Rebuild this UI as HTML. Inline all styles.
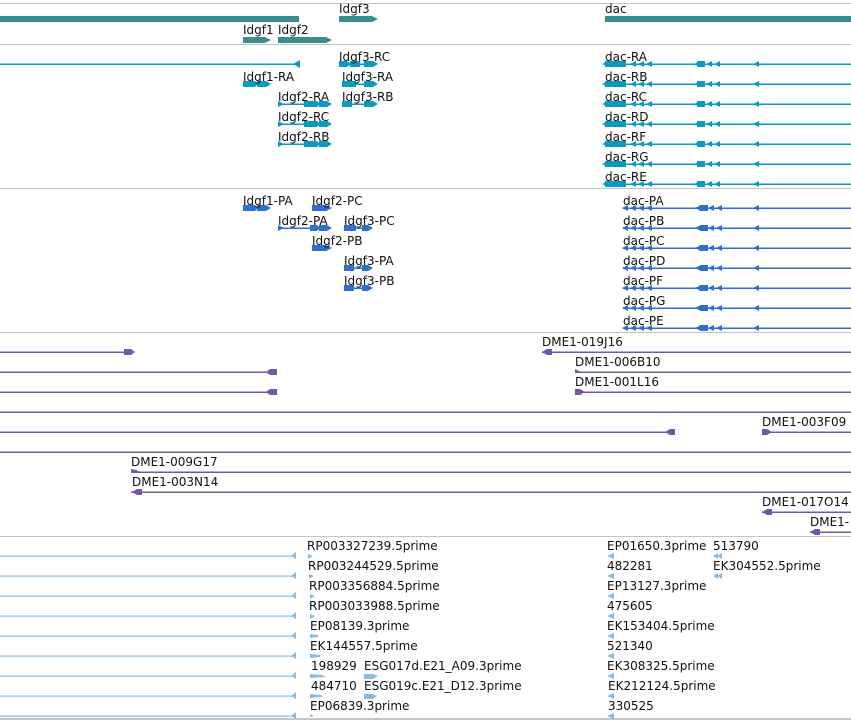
<!DOCTYPE html>
<html><head><meta charset="utf-8"><style>
html,body{margin:0;padding:0;background:#fff;}
svg{display:block;}
text{font-family:"DejaVu Sans","Liberation Sans",sans-serif;font-size:12px;fill:#111;}
</style></head><body>
<svg width="851" height="721" viewBox="0 0 851 721" xmlns="http://www.w3.org/2000/svg">
<defs>
<polygon id="la" points="0,0 6,-3 6,3" />
<polygon id="ra" points="6,0 0,-3 0,3" />
<g id="dacT"><rect x="605" y="-3" width="21" height="6"/><use href="#la" x="602"/><use href="#la" x="630"/><use href="#la" x="638"/><use href="#la" x="646"/><use href="#la" x="694"/><rect x="697" y="-3" width="8" height="6"/><use href="#la" x="706"/><use href="#la" x="714"/><use href="#la" x="753"/><rect x="605" y="-0.5" width="246" height="1.5"/></g>
<g id="dacP"><use href="#la" x="622"/><use href="#la" x="630"/><use href="#la" x="638"/><use href="#la" x="646"/><use href="#la" x="695"/><rect x="700" y="-3" width="8" height="6"/><use href="#la" x="708"/><use href="#la" x="716"/><use href="#la" x="753"/><rect x="623" y="-0.5" width="228" height="1.5"/></g>
</defs>
<g fill="#c4c4c4"><rect x="0" y="3" width="851" height="1"/><rect x="0" y="44" width="851" height="1"/><rect x="0" y="188" width="851" height="1"/><rect x="0" y="332" width="851" height="1"/><rect x="0" y="536" width="851" height="1"/><rect x="0" y="718" width="851" height="2"/></g>

<!-- track 1 -->
<g fill="#3d8c8e">
<rect x="0" y="16" width="299" height="6"/>
<polygon points="339,16 372,16 378,19 372,22 339,22"/>
<rect x="605" y="16" width="246" height="6"/>
<polygon points="243,37 265,37 271,40 265,43 243,43"/>
<polygon points="278,37 326,37 332,40 326,43 278,43"/>
</g>
<text x="339" y="13">Idgf3</text><text x="605" y="13">dac</text>
<text x="243" y="34">Idgf1</text><text x="278" y="34">Idgf2</text>

<!-- track 2 -->
<g fill="#0a9bc2">
<rect x="0" y="63.5" width="296" height="1.5"/><polygon points="300,60 300,68 293,64"/>
<g transform="translate(0,64)"><rect x="339" y="-3" width="8" height="6"/><use href="#ra" x="346"/><rect x="350" y="-3" width="10" height="6"/><rect x="339" y="-.5" width="35" height="1.5"/><polygon points="364,-3 373,-3 378,0 373,3 364,3"/></g>
<g transform="translate(0,84)"><polygon points="243,-3 255,-3 258,0 255,3 243,3"/><polygon points="257,-3 266,-3 271,0 266,3 257,3"/><rect x="342" y="-3" width="14" height="6"/><rect x="342" y="-.5" width="30" height="1.5"/><polygon points="364,-3 373,-3 378,0 373,3 364,3"/></g>
<g transform="translate(0,104)"><rect x="278" y="-.5" width="50" height="1.5"/><use href="#ra" x="278"/><polygon points="304,-3 317,-3 320,0 317,3 304,3"/><polygon points="319,-3 327,-3 332,0 327,3 319,3"/><rect x="342" y="-3" width="10" height="6"/><rect x="342" y="-.5" width="30" height="1.5"/><polygon points="364,-3 373,-3 378,0 373,3 364,3"/></g>
<g transform="translate(0,124)"><rect x="278" y="-.5" width="50" height="1.5"/><use href="#ra" x="278"/><polygon points="304,-3 317,-3 320,0 317,3 304,3"/><polygon points="319,-3 327,-3 332,0 327,3 319,3"/></g>
<g transform="translate(0,144)"><rect x="278" y="-.5" width="50" height="1.5"/><use href="#ra" x="278"/><polygon points="304,-3 317,-3 320,0 317,3 304,3"/><polygon points="319,-3 327,-3 332,0 327,3 319,3"/></g>
<use href="#dacT" y="64"/><use href="#dacT" y="84"/><use href="#dacT" y="104"/><use href="#dacT" y="124"/><use href="#dacT" y="144"/><use href="#dacT" y="164"/><use href="#dacT" y="184"/>
</g>
<text x="339" y="61">Idgf3-RC</text><text x="243" y="81">Idgf1-RA</text><text x="342" y="81">Idgf3-RA</text>
<text x="278" y="101">Idgf2-RA</text><text x="342" y="101">Idgf3-RB</text><text x="278" y="121">Idgf2-RC</text><text x="278" y="141">Idgf2-RB</text>
<text x="605" y="61">dac-RA</text><text x="605" y="81">dac-RB</text><text x="605" y="101">dac-RC</text><text x="605" y="121">dac-RD</text><text x="605" y="141">dac-RF</text><text x="605" y="161">dac-RG</text><text x="605" y="181">dac-RE</text>

<!-- track 3 -->
<g fill="#2e6fd2">
<g transform="translate(0,208)"><polygon points="243,-3 255,-3 258,0 255,3 243,3"/><polygon points="257,-3 266,-3 271,0 266,3 257,3"/><polygon points="312,-3 326,-3 332,0 326,3 312,3"/></g>
<g transform="translate(0,228)"><rect x="278" y="-.5" width="50" height="1.5"/><use href="#ra" x="278"/><polygon points="310,-3 317,-3 320,0 317,3 310,3"/><polygon points="319,-3 327,-3 332,0 327,3 319,3"/><rect x="344" y="-3" width="12" height="6"/><rect x="344" y="-.5" width="25" height="1.5"/><polygon points="362,-3 368,-3 373,0 368,3 362,3"/></g>
<g transform="translate(0,248)"><polygon points="312,-3 326,-3 332,0 326,3 312,3"/></g>
<g transform="translate(0,268)"><rect x="344" y="-3" width="10" height="6"/><rect x="344" y="-.5" width="25" height="1.5"/><polygon points="362,-3 368,-3 373,0 368,3 362,3"/></g>
<g transform="translate(0,288)"><rect x="344" y="-3" width="10" height="6"/><rect x="344" y="-.5" width="25" height="1.5"/><polygon points="362,-3 368,-3 373,0 368,3 362,3"/></g>
<use href="#dacP" y="208"/><use href="#dacP" y="228"/><use href="#dacP" y="248"/><use href="#dacP" y="268"/><use href="#dacP" y="288"/><use href="#dacP" y="308"/><use href="#dacP" y="328"/>
</g>
<text x="243" y="205">Idgf1-PA</text><text x="312" y="205">Idgf2-PC</text><text x="278" y="225">Idgf2-PA</text><text x="344" y="225">Idgf3-PC</text>
<text x="312" y="245">Idgf2-PB</text><text x="344" y="265">Idgf3-PA</text><text x="344" y="285">Idgf3-PB</text>
<text x="623" y="205">dac-PA</text><text x="623" y="225">dac-PB</text><text x="623" y="245">dac-PC</text><text x="623" y="265">dac-PD</text><text x="623" y="285">dac-PF</text><text x="623" y="305">dac-PG</text><text x="623" y="325">dac-PE</text>

<!-- track 4 -->
<g fill="#7455aa">
<rect x="0" y="351.5" width="126" height="1.5"/><polygon points="124,349 131,349 135,352 131,355 124,355"/>
<rect x="0" y="371.5" width="270" height="1.5"/><polygon points="277,369 270,369 266,372 270,375 277,375"/>
<rect x="0" y="391.5" width="270" height="1.5"/><polygon points="277,389 270,389 266,392 270,395 277,395"/>
<rect x="0" y="411.5" width="851" height="1.5"/>
<rect x="0" y="431.5" width="670" height="1.5"/><polygon points="675,429 670,429 665,432 670,435 675,435"/>
<rect x="0" y="451.5" width="851" height="1.5"/>
<rect x="542" y="351.5" width="309" height="1.5"/><polygon points="552,349 547,349 542,352 547,355 552,355"/>
<rect x="575" y="371.5" width="276" height="1.5"/><polygon points="575,369 581,372 575,373"/>
<rect x="575" y="391.5" width="276" height="1.5"/><polygon points="575,389 580,389 585,392 580,395 575,395"/>
<rect x="762" y="431.5" width="89" height="1.5"/><polygon points="762,429 767,429 772,432 767,435 762,435"/>
<rect x="131" y="471.5" width="720" height="1.5"/><polygon points="131,469 136,470 140,472 131,473"/>
<rect x="131" y="491.5" width="720" height="1.5"/><polygon points="142,489 137,489 132,492 137,495 142,495"/>
<rect x="762" y="511.5" width="89" height="1.5"/><polygon points="772,509 767,509 762,512 767,515 772,515"/>
<rect x="810" y="531.5" width="41" height="1.5"/><polygon points="820,529 815,529 810,532 815,535 820,535"/>
</g>
<text x="542" y="346">DME1-019J16</text><text x="575" y="366">DME1-006B10</text><text x="575" y="386">DME1-001L16</text>
<text x="762" y="426">DME1-003F09</text><text x="131" y="466">DME1-009G17</text><text x="132" y="486">DME1-003N14</text>
<text x="762" y="506">DME1-017O14</text><text x="810" y="526">DME1-</text>

<!-- track 5 -->
<g fill="#86bde2">
<g id="estL"><rect x="0" y="555.5" width="296" height="1.2"/><polygon points="296,552 296,559 291,556"/></g>
<use href="#estL" y="20"/><use href="#estL" y="40"/><use href="#estL" y="60"/><use href="#estL" y="80"/><use href="#estL" y="100"/><use href="#estL" y="120"/><use href="#estL" y="140"/><use href="#estL" y="160"/>
<polygon points="308,554 313,556 308,559"/><polygon points="309,574 314,576 309,579"/><polygon points="310,594 315,596 310,599"/><polygon points="310,614 315,616 310,619"/>
<polygon points="310,634 318,635 318,637 310,638"/><polygon points="310,654 320,655 320,657 310,658"/>
<polygon points="310,674 322,675 326,677 310,678"/><polygon points="310,694 322,695 322,697 310,698"/><polygon points="310,714 314,716 310,717"/>
<polygon points="364,674 373,674 378,676 373,679 364,679"/><polygon points="364,694 373,694 377,696 373,699 364,699"/>
<g id="estR"><polygon points="607,556 614,553 614,559"/></g>
<use href="#estR" y="20"/><use href="#estR" y="40"/><use href="#estR" y="60"/><use href="#estR" y="80"/><use href="#estR" y="100"/><use href="#estR" y="120"/><use href="#estR" y="140"/><use href="#estR" y="160"/>
<polygon points="713,556 718,553 718,559"/><polygon points="717,556 722,553 722,559"/>
<polygon points="713,576 718,573 718,579"/><polygon points="717,576 722,573 722,579"/>
</g>
<text x="307" y="550">RP003327239.5prime</text><text x="308" y="570">RP003244529.5prime</text><text x="309" y="590">RP003356884.5prime</text>
<text x="309" y="610">RP003033988.5prime</text><text x="310" y="630">EP08139.3prime</text><text x="310" y="650">EK144557.5prime</text>
<text x="311" y="670">198929</text><text x="364" y="670">ESG017d.E21_A09.3prime</text>
<text x="311" y="690">484710</text><text x="364" y="690">ESG019c.E21_D12.3prime</text>
<text x="310" y="710">EP06839.3prime</text>
<text x="607" y="550">EP01650.3prime</text><text x="713" y="550">513790</text>
<text x="607" y="570">482281</text><text x="713" y="570">EK304552.5prime</text>
<text x="607" y="590">EP13127.3prime</text><text x="607" y="610">475605</text><text x="607" y="630">EK153404.5prime</text>
<text x="607" y="650">521340</text><text x="607" y="670">EK308325.5prime</text><text x="608" y="690">EK212124.5prime</text><text x="608" y="710">330525</text>
</svg>
</body></html>
